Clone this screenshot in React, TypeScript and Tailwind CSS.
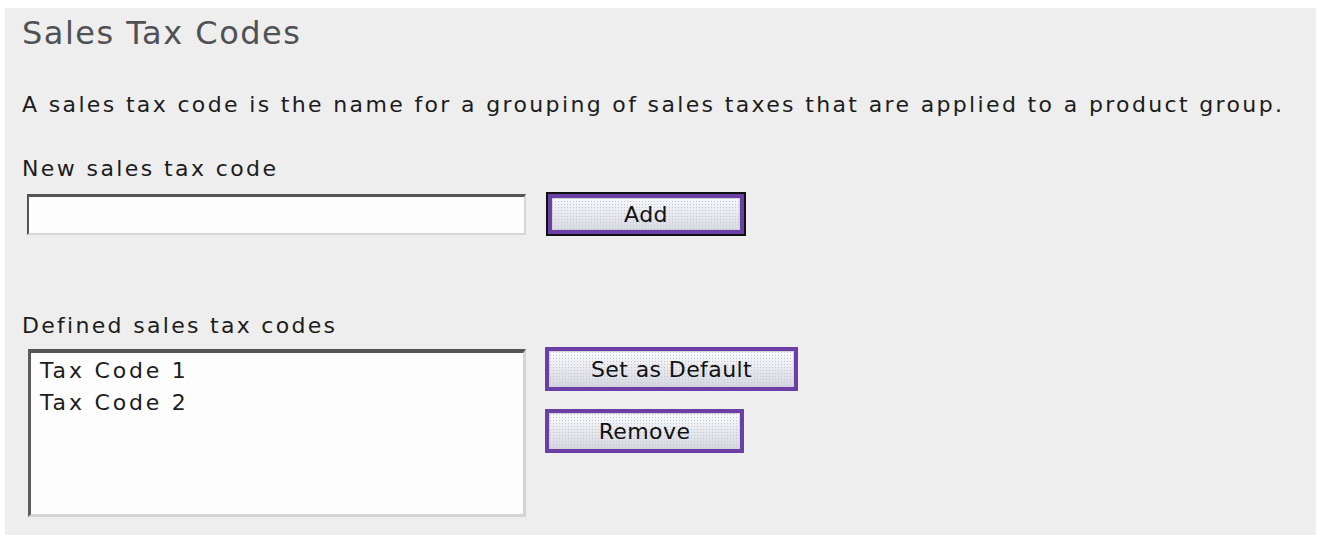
import { useState } from 'react';

const FONT = { fontFamily: '"DejaVu Sans", Verdana, Tahoma, sans-serif' };

export default function App() {
  const [codes, setCodes] = useState(['Tax Code 1', 'Tax Code 2']);
  const [draft, setDraft] = useState('');
  const [selected, setSelected] = useState<string | null>(null);

  function handleAdd() {
    const name = draft.trim();
    if (!name || codes.includes(name)) return;
    setCodes([...codes, name]);
    setDraft('');
  }

  function handleRemove() {
    if (!selected) return;
    setCodes(codes.filter((c) => c !== selected));
    setSelected(null);
  }

  return (
    <div className="min-h-[535px] bg-white px-[5px] pt-2" style={FONT}>
      <div className="min-h-[527px] bg-[#eeeeee] pl-[17px] pt-[5px] text-[#1c1c1c]">
        <h1 className="text-[32px] leading-[40px] tracking-[1.5px] text-[#4f5154]">Sales Tax Codes</h1>

        <p className="mt-[38px] whitespace-nowrap text-[22px] leading-[28px] tracking-[2.35px]">
          A sales tax code is the name for a grouping of sales taxes that are applied to a product group.
        </p>

        {/* New code */}
        <label htmlFor="new-code" className="mt-[36px] block text-[22px] leading-[28px] tracking-[2.4px]">
          New sales tax code
        </label>
        <div className="mt-[9px] flex items-center gap-[20px] pl-[5px]">
          <input
            id="new-code"
            value={draft}
            onChange={(e) => setDraft(e.target.value)}
            className="h-[41px] w-[499px] border-2 border-t-[3px] border-t-[#555] border-l-[#555] border-r-[#d6d6d6] border-b-[#d6d6d6] bg-[#fdfdfd] px-2 text-[22px] outline-none"
            style={FONT}
          />
          <PanelButton label="Add" width="w-[200px]" focused onClick={handleAdd} />
        </div>

        {/* Existing codes */}
        <p className="mt-[76px] text-[22px] leading-[28px] tracking-[2.3px]">Defined sales tax codes</p>
        <div className="mt-[7px] flex items-start gap-[19px] pl-[6px]">
          <ul className="mt-[2px] h-[168px] w-[498px] overflow-auto border-[3px] border-t-[4px] border-t-[#555] border-l-[#5c5c5c] border-r-[#d4d4d4] border-b-[#d4d4d4] bg-[#fdfdfd] pl-[9px] pt-[2px]">
            {codes.map((code) => (
              <li
                key={code}
                onClick={() => setSelected(code)}
                className={`cursor-default text-[22px] leading-[32px] tracking-[2.8px] ${
                  selected === code ? 'bg-[#6a3fa6] text-white' : ''
                }`}
              >
                {code}
              </li>
            ))}
          </ul>
          <div className="flex flex-col gap-[18px]">
            <PanelButton label="Set as Default" width="w-[253px]" />
            <PanelButton label="Remove" width="w-[199px]" onClick={handleRemove} />
          </div>
        </div>
      </div>
    </div>
  );
}

/* ── Button ─────────────────────────────── */

function PanelButton({
  label,
  width,
  focused = false,
  onClick,
}: {
  label: string;
  width: string;
  focused?: boolean;
  onClick?: () => void;
}) {
  return (
    <button
      type="button"
      onClick={onClick}
      className={`h-[44px] ${width} shrink-0 bg-[image:radial-gradient(circle,#c4c7d4_0.7px,transparent_1px),linear-gradient(#fbfbfd,#d5d7e0)] bg-[length:3px_3px,100%_100%] text-[22px] tracking-[0.4px] text-[#111] ${
        focused
          ? 'border-2 border-[#111] shadow-[inset_0_0_0_4px_#6a3fa6,inset_0_0_0_5px_#d2d2d6]'
          : 'border-4 border-[#6a3fa6] shadow-[inset_0_0_0_1px_#d2d2d6]'
      }`}
      style={FONT}
    >
      {label}
    </button>
  );
}
